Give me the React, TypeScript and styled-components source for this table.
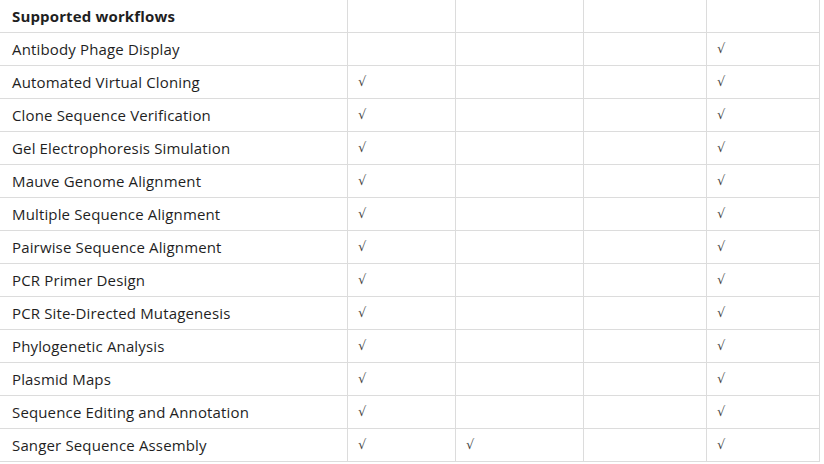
import React from "react";
import styled, { createGlobalStyle } from "styled-components";

const Global = createGlobalStyle`
  html, body { margin: 0; padding: 0; background: #ffffff; }
  body { font-family: "Open Sans", "Noto Sans", sans-serif; color: #1f1f1f; overflow: hidden; }
`;

const Table = styled.table`
  border-collapse: collapse;
  table-layout: fixed;
  width: 820px;
  margin: -1px 0 0 -1px;
  font-size: 15px;
  letter-spacing: 0.15px;
`;

const Col = styled.col<{ $w: number }>`
  width: ${(p) => p.$w}px;
`;

const Row = styled.tr`
  height: 33px;
`;

const NameCell = styled.td<{ $head?: boolean }>`
  border: 1px solid #dcdcdc;
  padding: 0 12px 1px;
  vertical-align: middle;
  white-space: nowrap;
  font-weight: ${(p) => (p.$head ? 700 : 400)};
  color: #1f1f1f;
`;

const MarkCell = styled.td`
  border: 1px solid #dcdcdc;
  padding: 0 0 4px 10px;
  vertical-align: middle;
`;

const Check = styled.span`
  font-family: "DejaVu Sans", sans-serif;
  font-size: 13px;
  color: #4a4a4a;
`;

const widths = [348, 108, 128, 123, 113];

const rows: [string, number[]][] = [
  ["Antibody Phage Display", [4]],
  ["Automated Virtual Cloning", [1, 4]],
  ["Clone Sequence Verification", [1, 4]],
  ["Gel Electrophoresis Simulation", [1, 4]],
  ["Mauve Genome Alignment", [1, 4]],
  ["Multiple Sequence Alignment", [1, 4]],
  ["Pairwise Sequence Alignment", [1, 4]],
  ["PCR Primer Design", [1, 4]],
  ["PCR Site-Directed Mutagenesis", [1, 4]],
  ["Phylogenetic Analysis", [1, 4]],
  ["Plasmid Maps", [1, 4]],
  ["Sequence Editing and Annotation", [1, 4]],
  ["Sanger Sequence Assembly", [1, 2, 4]],
];

export default function App() {
  return (
    <>
      <Global />
      <Table>
        <colgroup>
          {widths.map((w, i) => (
            <Col key={i} $w={w} />
          ))}
        </colgroup>
        <tbody>
          <Row>
            <NameCell $head>Supported workflows</NameCell>
            <MarkCell />
            <MarkCell />
            <MarkCell />
            <MarkCell />
          </Row>
          {rows.map(([name, marks]) => (
            <Row key={name}>
              <NameCell>{name}</NameCell>
              {[1, 2, 3, 4].map((c) => (
                <MarkCell key={c}>{marks.includes(c) ? <Check>√</Check> : null}</MarkCell>
              ))}
            </Row>
          ))}
        </tbody>
      </Table>
    </>
  );
}
